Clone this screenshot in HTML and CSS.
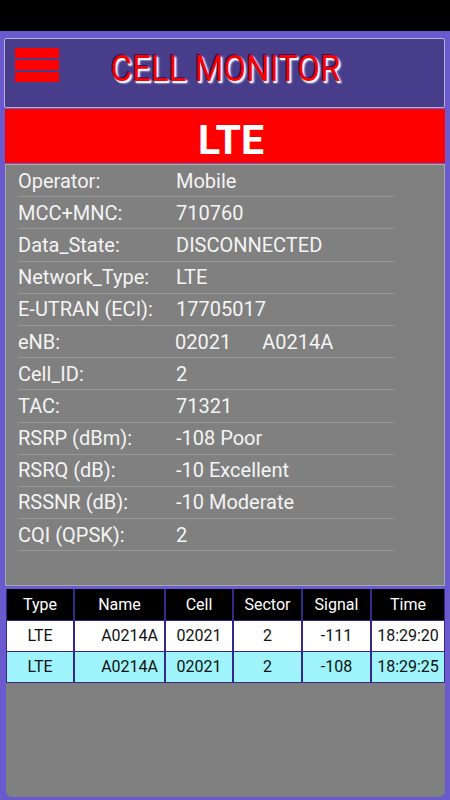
FILE: index.html
```html
<!DOCTYPE html>
<html lang="en">
<head>
  <meta charset="UTF-8" />
  <meta name="viewport" content="width=device-width, initial-scale=1" />
  <title>Cell Monitor</title>
  <link rel="stylesheet" href="styles.css">
</head>
<body>
  <div class="status-bar"></div>

  <div class="header">
    <div class="menu">
      <span></span>
      <span></span>
      <span></span>
    </div>
    <h1 class="title">CELL MONITOR</h1>
  </div>

  <div class="tech">LTE</div>

  <div class="info">
    <div class="row"><span class="label">Operator:</span><span class="value">Mobile</span></div>
    <div class="row"><span class="label">MCC+MNC:</span><span class="value">710760</span></div>
    <div class="row"><span class="label">Data_State:</span><span class="value">DISCONNECTED</span></div>
    <div class="row"><span class="label">Network_Type:</span><span class="value">LTE</span></div>
    <div class="row"><span class="label">E-UTRAN (ECI):</span><span class="value">17705017</span></div>
    <div class="row"><span class="label">eNB:</span><span class="value enb"><span>02021</span><span>A0214A</span></span></div>
    <div class="row"><span class="label">Cell_ID:</span><span class="value">2</span></div>
    <div class="row"><span class="label">TAC:</span><span class="value">71321</span></div>
    <div class="row"><span class="label">RSRP (dBm):</span><span class="value">-108 Poor</span></div>
    <div class="row"><span class="label">RSRQ (dB):</span><span class="value">-10 Excellent</span></div>
    <div class="row"><span class="label">RSSNR (dB):</span><span class="value">-10 Moderate</span></div>
    <div class="row"><span class="label">CQI (QPSK):</span><span class="value">2</span></div>
  </div>

  <div class="log">
    <div class="grid">
      <div class="th">Type</div>
      <div class="th">Name</div>
      <div class="th">Cell</div>
      <div class="th">Sector</div>
      <div class="th">Signal</div>
      <div class="th">Time</div>

      <div class="td">LTE</div>
      <div class="td name">A0214A</div>
      <div class="td">02021</div>
      <div class="td">2</div>
      <div class="td">-111</div>
      <div class="td">18:29:20</div>

      <div class="td alt">LTE</div>
      <div class="td alt name">A0214A</div>
      <div class="td alt">02021</div>
      <div class="td alt">2</div>
      <div class="td alt">-108</div>
      <div class="td alt">18:29:25</div>
    </div>
  </div>
</body>
</html>
```

FILE: styles.css
```css
body {
  margin: 0;
  background: #6a5acd;
  font-family: Roboto, "Liberation Sans", sans-serif;
  height: 800px;
  overflow: hidden;
}
.status-bar {
  height: 31px;
  background: #000;
}
.header {
  box-sizing: border-box;
  height: 70px;
  margin: 7px 5px 0 4px;
  background: #483d8b;
  border: 1px solid #b4b0d8;
  border-radius: 2px;
  display: grid;
  grid-template-columns: 1fr auto 1fr;
  align-items: start;
}
.menu {
  display: flex;
  flex-direction: column;
  gap: 2px;
  margin: 9px 0 0 10px;
}
.menu span {
  display: block;
  width: 44px;
  height: 10px;
  background: #ff0000;
}
.title {
  grid-column: 2;
  margin: 13px 0 0 2px;
  font-size: 33px;
  font-weight: 400;
  line-height: 34px;
  color: #ff0000;
  text-shadow: -1px -1px 0 #2a1670, 2px 2px 2px #ffffff, 1px 2px 1px #e8e8f0;
  transform: scaleY(1.1);
}
.tech {
  box-sizing: border-box;
  height: 54px;
  margin: 1px 5px 0 5px;
  padding: 9px 0 0 12px;
  background: #ff0000;
  color: #fff;
  font-size: 41px;
  font-weight: bold;
  line-height: 45px;
  text-align: center;
}
.info {
  box-sizing: border-box;
  height: 422px;
  margin: 1px 5px 0 5px;
  background: #808080;
  border: 1px solid #a8a8a8;
  padding-left: 12px;
}
.row {
  box-sizing: border-box;
  display: flex;
  align-items: center;
  width: 377px;
  height: 32.2px;
  border-bottom: 1px solid #969696;
  color: #f4f4f4;
  font-size: 20px;
}
.label {
  width: 158px;
}
.enb {
  display: flex;
  gap: 31px;
  margin-left: -1px;
}
.log {
  height: 208px;
  margin: 3px 5px 0 6px;
  background: #808080;
  border-radius: 0 0 6px 6px;
}
.grid {
  display: grid;
  grid-template-columns: 66px 89px 66px 67px 67px 72px;
  column-gap: 2px;
  row-gap: 1px;
  padding: 0 1px 1px 1px;
  background: #35288a;
  font-size: 16px;
}
.th, .td {
  height: 31px;
  line-height: 31px;
  text-align: center;
}
.th {
  background: #000;
  color: #fff;
}
.td {
  height: 30px;
  line-height: 30px;
  background: #fff;
  color: #111;
}
.td.alt {
  background: #9ef4fa;
}
.td.name {
  text-align: right;
  padding-right: 6px;
}
```
